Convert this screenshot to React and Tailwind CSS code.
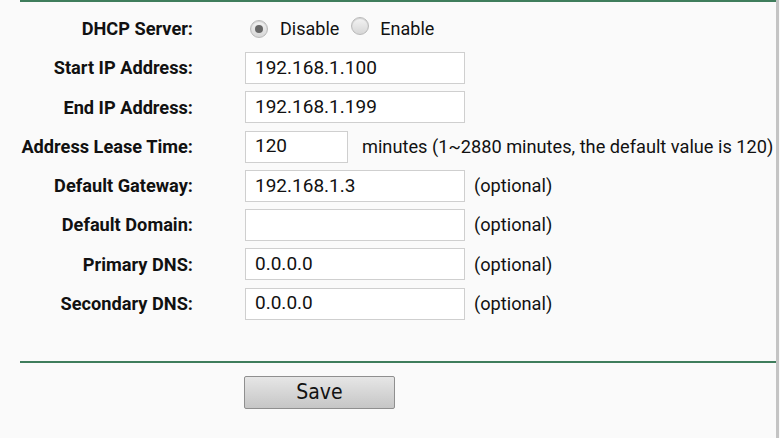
import React from 'react';

const rows = [
  { label: 'Start IP Address:', value: '192.168.1.100' },
  { label: 'End IP Address:', value: '192.168.1.199' },
  { label: 'Address Lease Time:', value: '120', short: true, note: 'minutes (1~2880 minutes, the default value is 120)' },
  { label: 'Default Gateway:', value: '192.168.1.3', note: '(optional)' },
  { label: 'Default Domain:', value: '', note: '(optional)' },
  { label: 'Primary DNS:', value: '0.0.0.0', note: '(optional)' },
  { label: 'Secondary DNS:', value: '0.0.0.0', note: '(optional)' },
];

function Radio({ checked }) {
  return (
    <span className="relative inline-flex h-[18px] w-[18px] items-center justify-center rounded-full border border-[#b9b9b9] bg-gradient-to-b from-[#f4f4f4] to-[#d6d6d6] shadow-[inset_0_1px_1px_rgba(0,0,0,0.15)]">
      {checked && <span className="h-[8px] w-[8px] rounded-full bg-[#666]" />}
    </span>
  );
}

function Label({ children }) {
  return <div className="w-[193px] shrink-0 text-right text-[18.2px] font-bold text-[#111]">{children}</div>;
}

export default function App() {
  return (
    <div className="h-[438px] w-[780px] overflow-hidden bg-[#fafafa] font-['Roboto',sans-serif] text-[#111]">
      <div className="flex h-full">
        <div className="flex w-[776px] flex-col">
          <div className="ml-[20px] h-[2px] bg-[#3f7d5c]" />
          <div className="pt-[7px]">
            <div className="flex h-[39.3px] items-center">
              <Label>DHCP Server:</Label>
              <div className="ml-[57px] flex items-center text-[18px]">
                <Radio checked />
                <span className="ml-[12px]">Disable</span>
                <span className="ml-[12px]"><Radio /></span>
                <span className="ml-[11px]">Enable</span>
              </div>
            </div>
            {rows.map((r) => (
              <div key={r.label} className="flex h-[39.3px] items-center">
                <Label>{r.label}</Label>
                <div
                  className={`ml-[52px] flex h-[32px] items-center border border-[#cfcfcf] bg-white pl-[9px] text-[19px] ${r.short ? 'w-[103px]' : 'w-[220px]'}`}
                >
                  {r.value}
                </div>
                {r.note && (
                  <span className={`text-[18.2px] ${r.short ? 'ml-[14px]' : 'ml-[9px]'}`}>{r.note}</span>
                )}
              </div>
            ))}
          </div>
          <div className="ml-[20px] mt-[38px] h-[2px] bg-[#3f7d5c]" />
          <div className="ml-[244px] mt-[13px]">
            <button className="flex h-[33px] w-[151px] items-center justify-center rounded-[2px] border border-[#8f8f8f] bg-gradient-to-b from-[#e6e6e6] to-[#c6c6c6] font-['Liberation_Sans_Narrow','DejaVu_Sans_Condensed',sans-serif] text-[21px] text-[#111]">
              Save
            </button>
          </div>
        </div>
        <div className="w-[3px] bg-[#c4c4c4]" />
        <div className="flex-1 bg-[#fafafa]" />
      </div>
    </div>
  );
}
